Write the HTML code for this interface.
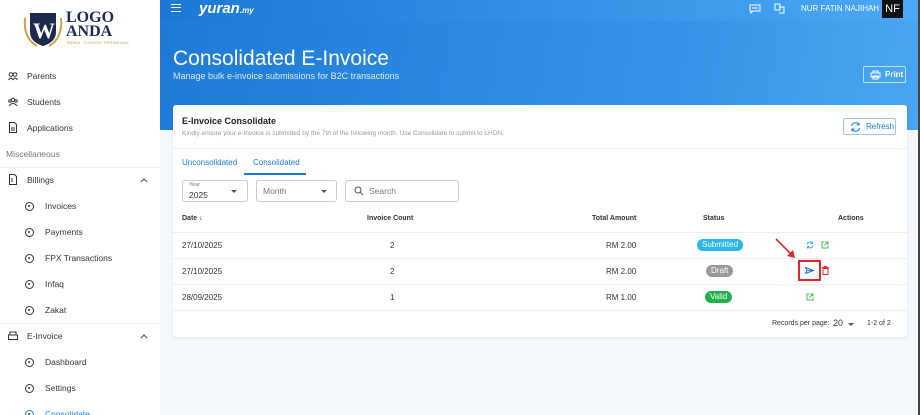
<!DOCTYPE html>
<html style="width:920px;height:415px;overflow:hidden"><head><style>
*{box-sizing:border-box;margin:0;padding:0}
body{width:920px;height:415px;overflow:hidden;font-family:"Liberation Sans",sans-serif;background:#f5f8fc;position:relative;font-size:8px;color:#333}
.sb{position:absolute;left:0;top:0;width:160px;height:415px;background:#fff}
.it{position:absolute;left:0;height:20px;display:flex;align-items:center;font-size:8.5px;color:#333}
.ic{position:absolute;left:8px;width:10px;height:10px}
.dot{position:absolute;left:25px;width:9px;height:9px;border:1.3px solid #333;border-radius:50%}
.dot:after{content:"";position:absolute;left:2px;top:2px;width:2.4px;height:2.4px;background:#333;border-radius:50%}
.hdr{position:absolute;left:160px;top:0;width:760px;height:130px;background:linear-gradient(100deg,#1e7ad6,#3595e8 70%,#4aa6f0)}
.top{position:absolute;left:160px;top:0;width:760px;height:21px;background:linear-gradient(90deg,#1c78d5,#4aa8f5)}
.card{position:absolute;left:173px;top:105px;width:734px;height:232px;background:#fff;border-radius:3px;box-shadow:0 1px 2px rgba(0,0,0,.08)}
.sel{position:absolute;top:75px;height:22px;border:1px solid #ccc;border-radius:3px;background:#fff}
.row{position:absolute;left:0;width:734px;border-bottom:1px solid #eee;height:26px}
.c{position:absolute;font-size:8px;color:#333}
.pill{position:absolute;color:#fff;font-size:8px;border-radius:7px;padding:0 5px;height:12px;line-height:12px}
</style></head><body>
<div class="sb">
 <svg style="position:absolute;left:21px;top:10px" width="44" height="38" viewBox="0 0 44 38"><path d="M4 8 Q2 28 16 36 M40 8 Q42 28 28 36" stroke="#c9a54a" stroke-width="2" fill="none"/><path d="M9 3H35V22Q35 32 22 36Q9 32 9 22Z" fill="#1c2a4f"/><text x="12" y="28" font-family="Liberation Serif" font-weight="bold" font-size="22" fill="#fff">W</text></svg>
 <div style="position:absolute;left:66px;top:11px;font-family:'Liberation Serif';font-weight:bold;font-size:16px;line-height:14px;color:#1c2a4f">LOGO<br>ANDA</div>
 <div style="position:absolute;left:66px;top:40px;font-size:4px;color:#c9a54a">TADIKA · TUISYEN · PERSATUAN</div>
 <div class="it" style="top:66px"><svg class="ic" style="top:5px" viewBox="0 0 10 10"><circle cx="3" cy="3.5" r="1.8" fill="none" stroke="#333"/><circle cx="7" cy="3.5" r="1.8" fill="none" stroke="#333"/><path d="M0.5 9Q3 5 5 9M5 9Q7 5 9.5 9" fill="none" stroke="#333"/></svg><span style="margin-left:27px">Parents</span></div>
 <div class="it" style="top:92px"><svg class="ic" style="top:5px" viewBox="0 0 10 10"><circle cx="5" cy="3" r="1.7" fill="none" stroke="#333"/><circle cx="2" cy="4" r="1.3" fill="none" stroke="#333"/><circle cx="8" cy="4" r="1.3" fill="none" stroke="#333"/><path d="M1 9Q5 4 9 9" fill="none" stroke="#333"/></svg><span style="margin-left:27px">Students</span></div>
 <div class="it" style="top:118px"><svg class="ic" style="top:4px;height:11px" viewBox="0 0 10 11"><path d="M1.5 .5H6.5L8.5 2.5V10.5H1.5Z M3 6H7M3 8H7" fill="none" stroke="#333"/></svg><span style="margin-left:27px">Applications</span></div>
 <div class="it" style="top:144px;left:6px;color:#777">Miscellaneous</div>
 <div style="position:absolute;top:167px;left:0;width:160px;border-top:1px solid #f0f0f0"></div>
 <div class="it" style="top:170px"><svg class="ic" style="top:4px;height:11px" viewBox="0 0 10 11"><path d="M1.5 .5H6.5L8.5 2.5V10.5H1.5Z M3 5H5M3 7H5" fill="none" stroke="#333"/></svg><span style="margin-left:27px">Billings</span></div>
 <svg style="position:absolute;left:140px;top:178px" width="8" height="5" viewBox="0 0 8 5"><path d="M1 4L4 1L7 4" fill="none" stroke="#555" stroke-width="1.2"/></svg>
 <div class="it" style="top:196px"><span class="dot" style="top:6px"></span><span style="margin-left:45px">Invoices</span></div>
 <div class="it" style="top:222px"><span class="dot" style="top:6px"></span><span style="margin-left:45px">Payments</span></div>
 <div class="it" style="top:248px"><span class="dot" style="top:6px"></span><span style="margin-left:45px">FPX Transactions</span></div>
 <div class="it" style="top:274px"><span class="dot" style="top:6px"></span><span style="margin-left:45px">Infaq</span></div>
 <div class="it" style="top:300px"><span class="dot" style="top:6px"></span><span style="margin-left:45px">Zakat</span></div>
 <div style="position:absolute;top:323px;left:0;width:160px;border-top:1px solid #f0f0f0"></div>
 <div class="it" style="top:326px"><svg class="ic" style="top:5px" viewBox="0 0 10 10"><path d="M2 1H8V4H2Z M.5 4H9.5V8.5H.5Z" fill="none" stroke="#333"/></svg><span style="margin-left:27px">E-Invoice</span></div>
 <svg style="position:absolute;left:140px;top:334px" width="8" height="5" viewBox="0 0 8 5"><path d="M1 4L4 1L7 4" fill="none" stroke="#555" stroke-width="1.2"/></svg>
 <div class="it" style="top:352px"><span class="dot" style="top:6px"></span><span style="margin-left:45px">Dashboard</span></div>
 <div class="it" style="top:378px"><span class="dot" style="top:6px"></span><span style="margin-left:45px">Settings</span></div>
 <div class="it" style="top:404px;color:#1e7ad6"><span class="dot" style="top:6px;border-color:#1e7ad6"></span><span style="margin-left:45px">Consolidate</span></div>
</div>
<div class="hdr"></div>
<div class="top"></div>
<div style="position:absolute;left:171px;top:4px;width:10px;height:8px;border-top:1.5px solid #fff;border-bottom:1.5px solid #fff"><div style="margin-top:2px;border-top:1.5px solid #fff"></div></div>
<div style="position:absolute;left:199px;top:0px;color:#fff;font-weight:bold;font-style:italic;font-size:15px">yuran<span style="font-size:8px">.my</span></div>
<svg style="position:absolute;left:749px;top:4px" width="12" height="10" viewBox="0 0 12 10"><path d="M1 1H11V7H4L2 9V7H1Z M3 4H9" fill="none" stroke="#fff"/></svg>
<svg style="position:absolute;left:774px;top:3px" width="11" height="11" viewBox="0 0 11 11"><path d="M1 1H6V7H1Z M5 4H10V10H5" fill="none" stroke="#fff"/></svg>
<div style="position:absolute;left:801px;top:4px;color:#fff;font-size:8px">NUR FATIN NAJIHAH</div>
<div style="position:absolute;left:882px;top:0;width:21px;height:18px;background:#111;color:#fff;font-size:11px;text-align:center;line-height:18px">NF</div>
<div style="position:absolute;left:173px;top:47px;color:#fff;font-size:21px">Consolidated E-Invoice</div>
<div style="position:absolute;left:173px;top:71px;color:#d8ebfb;font-size:9px">Manage bulk e-invoice submissions for B2C transactions</div>
<div style="position:absolute;left:863px;top:66px;width:43px;height:17px;border:1px solid #bfe0fb;border-radius:2px;color:#fff;font-size:8px;font-weight:bold;line-height:15px;padding-left:21px">Print<svg style="position:absolute;left:6px;top:3px" width="11" height="10" viewBox="0 0 11 10"><path d="M3 3V1H8V3M1 3H10V7H1Z M3 6H8V9H3Z" fill="none" stroke="#fff"/></svg></div>
<div class="card">
 <div style="position:absolute;left:9px;top:11px;font-size:9px;font-weight:bold;color:#222">E-Invoice Consolidate</div>
 <div style="position:absolute;left:9px;top:25px;font-size:6.5px;color:#999">Kindly ensure your e-Invoice is submitted by the 7th of the following month. Use Consolidate to submit to LHDN.</div>
 <div style="position:absolute;left:670px;top:13px;width:53px;height:17px;border:1px solid #9cc6ee;border-radius:2px;color:#1e7ad6;font-size:8px;line-height:15px;padding-left:22px">Refresh<svg style="position:absolute;left:6px;top:3px" width="11" height="10" viewBox="0 0 11 10"><path d="M1.5 4A4 4 0 0 1 9 3M9.5 6A4 4 0 0 1 2 7M9 0.5V3H6.5M2 9.5V7H4.5" fill="none" stroke="#1e7ad6"/></svg></div>
 <div style="position:absolute;left:0;top:43px;width:734px;border-top:1px solid #eee"></div>
 <div style="position:absolute;left:9px;top:53px;color:#1e7ad6;font-size:8px">Unconsolidated</div>
 <div style="position:absolute;left:80px;top:53px;color:#1e7ad6;font-size:8px">Consolidated</div>
 <div style="position:absolute;left:71px;top:68px;width:62px;border-top:2px solid #1e7ad6"></div>
 <div class="sel" style="left:9px;width:66px"><span style="position:absolute;left:6px;top:1px;font-size:5.5px;color:#777">Year</span><span style="position:absolute;left:6px;top:9px;font-size:8.5px">2025</span><svg style="position:absolute;left:48px;top:9px" width="6" height="4"><path d="M0 0H6L3 3Z" fill="#555"/></svg></div>
 <div class="sel" style="left:83px;width:81px"><span style="position:absolute;left:6px;top:5px;font-size:8.5px;color:#777">Month</span><svg style="position:absolute;left:64px;top:9px" width="6" height="4"><path d="M0 0H6L3 3Z" fill="#555"/></svg></div>
 <div class="sel" style="left:172px;width:114px"><svg style="position:absolute;left:8px;top:5px" width="10" height="10" viewBox="0 0 10 10"><circle cx="4" cy="4" r="3" fill="none" stroke="#555"/><path d="M6.3 6.3L9 9" stroke="#555"/></svg><span style="position:absolute;left:23px;top:5px;font-size:8.5px;color:#777">Search</span></div>
 <div class="row" style="top:102px;height:26px"><span class="c" style="left:9px;top:8px;font-weight:bold;font-size:7px">Date ↓</span><span class="c" style="left:194px;top:8px;font-weight:bold;font-size:7px">Invoice Count</span><span class="c" style="left:419px;top:8px;font-weight:bold;font-size:7px">Total Amount</span><span class="c" style="left:530px;top:8px;font-weight:bold;font-size:7px">Status</span><span class="c" style="left:665px;top:8px;font-weight:bold;font-size:7px">Actions</span></div>
 <div class="row" style="top:128px"><span class="c" style="left:9px;top:8px">27/10/2025</span><span class="c" style="left:217px;top:8px">2</span><span class="c" style="left:433px;top:8px">RM 2.00</span><span class="pill" style="left:524px;top:6px;background:#29b6e8">Submitted</span>
  <svg style="position:absolute;left:633px;top:8px" width="8" height="8" viewBox="0 0 8 8"><path d="M1 3.5A3 3 0 0 1 6.5 2.5M7 4.5A3 3 0 0 1 1.5 5.5M6.5 0.5V2.5H4.5M1.5 7.5V5.5H3.5" fill="none" stroke="#3bb0e8"/></svg>
  <svg style="position:absolute;left:648px;top:8px" width="8" height="8" viewBox="0 0 8 8"><path d="M3.5 1H1V7H7V4.5M4.5 1H7V3.5M7 1L3.5 4.5" fill="none" stroke="#3fbf5a"/></svg></div>
 <div class="row" style="top:154px"><span class="c" style="left:9px;top:8px">27/10/2025</span><span class="c" style="left:217px;top:8px">2</span><span class="c" style="left:433px;top:8px">RM 2.00</span><span class="pill" style="left:533px;top:6px;background:#999">Draft</span><div style="position:absolute;left:625px;top:1px;width:23px;height:21px;border:2px solid #e3242b"></div>
  <svg style="position:absolute;left:632px;top:8px" width="9" height="7" viewBox="0 0 9 7"><path d="M0.5 0.5L8.5 3.5L0.5 6.5L2 3.5Z M2 3.5H8" fill="none" stroke="#1e7ad6"/></svg>
  <svg style="position:absolute;left:649px;top:7px" width="7" height="9" viewBox="0 0 7 9"><path d="M0 1.5H7M2.5 1.5V0.5H4.5V1.5M1 2.5H6V8.5H1Z" fill="none" stroke="#d33"/></svg></div>
 <div class="row" style="top:180px"><span class="c" style="left:9px;top:8px">28/09/2025</span><span class="c" style="left:217px;top:8px">1</span><span class="c" style="left:433px;top:8px">RM 1.00</span><span class="pill" style="left:532px;top:6px;background:#21b14a">Valid</span>
  <svg style="position:absolute;left:633px;top:8px" width="8" height="8" viewBox="0 0 8 8"><path d="M3.5 1H1V7H7V4.5M4.5 1H7V3.5M7 1L3.5 4.5" fill="none" stroke="#3fbf5a"/></svg></div>
 <span class="c" style="left:599px;top:215px;font-size:7px">Records per page:</span><span class="c" style="left:660px;top:213px;font-size:9px">20</span><svg style="position:absolute;left:675px;top:218px" width="6" height="4"><path d="M0 0H6L3 3Z" fill="#555"/></svg><span class="c" style="left:694px;top:215px;font-size:7px">1-2 of 2</span>
</div>
<svg style="position:absolute;left:774px;top:237px" width="24" height="24" viewBox="0 0 24 24"><path d="M2 2L19 19" stroke="#e3242b" stroke-width="1.6"/><path d="M21 21L13 19L19 13Z" fill="#e3242b"/></svg>
<div style="position:absolute;left:918px;top:0;width:2px;height:415px;background:#444"></div>
</body></html>
